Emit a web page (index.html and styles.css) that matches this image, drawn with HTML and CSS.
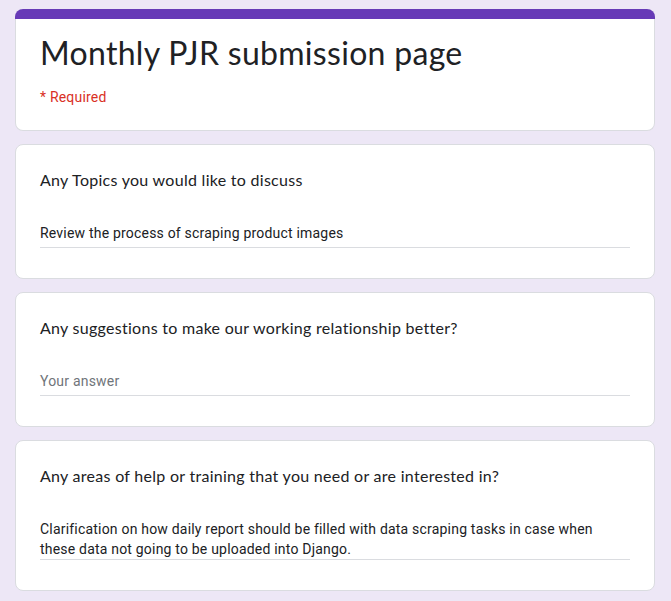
FILE: index.html
```html
<!DOCTYPE html>
<html lang="en">
<head>
<meta charset="utf-8">
<title>Monthly PJR submission page</title>
<link rel="stylesheet" href="styles.css">
</head>
<body>
<main class="form">
  <section class="card header-card">
    <div class="accent-bar"></div>
    <div class="header-body">
      <h1 class="form-title">Monthly PJR submission page</h1>
      <div class="required-note">* Required</div>
    </div>
  </section>

  <section class="card question-card">
    <div class="question-title">Any Topics you would like to discuss</div>
    <div class="answer short-answer">Review the process of scraping product images</div>
  </section>

  <section class="card question-card">
    <div class="question-title">Any suggestions to make our working relationship better?</div>
    <div class="answer short-answer placeholder">Your answer</div>
  </section>

  <section class="card question-card">
    <div class="question-title">Any areas of help or training that you need or are interested in?</div>
    <div class="answer paragraph-answer">Clarification on how daily report should be filled with data scraping tasks in case when these data not going to be uploaded into Django.</div>
  </section>
</main>
</body>
</html>
```
FILE: styles.css
```css
html, body {
  margin: 0;
  padding: 0;
}

body {
  background: #ede7f6;
  color: #202124;
  font-family: Roboto, "Liberation Sans", sans-serif;
  padding: 0 16px 0 15px;
}

.form {
  max-width: 640px;
  padding: 9px 0 20px;
  display: flex;
  flex-direction: column;
  gap: 13px;
}

.card {
  background: #ffffff;
  border: 1px solid #dadce0;
  border-radius: 8px;
}

.header-card {
  border-top: none;
}

.accent-bar {
  height: 10px;
  margin: 0 -1px;
  background: #673ab7;
  border-radius: 8px 8px 0 0;
}

.header-body {
  padding: 14px 24px 23px;
}

.form-title {
  margin: 0;
  font-family: Lato, "Open Sans", sans-serif;
  font-weight: 400;
  font-size: 32px;
  line-height: 40px;
  letter-spacing: 0.3px;
  color: #202124;
}

.required-note {
  margin-top: 14px;
  font-family: Roboto, sans-serif;
  font-size: 14px;
  line-height: 20px;
  letter-spacing: 0.2px;
  color: #d93025;
}

.question-card {
  padding: 23px 24px 30px;
}

.question-title {
  font-family: Lato, "Open Sans", sans-serif;
  font-size: 16px;
  line-height: 24px;
  letter-spacing: 0.28px;
  color: #202124;
}

.answer {
  margin-top: 31px;
  font-family: Roboto, sans-serif;
  font-size: 14px;
  line-height: 20px;
  letter-spacing: 0.2px;
  color: #202124;
  border-bottom: 1px solid #dadce0;
}

.short-answer {
  padding-bottom: 4px;
}

.paragraph-answer {
  padding-bottom: 0;
}

.placeholder {
  color: #70757a;
}
```
